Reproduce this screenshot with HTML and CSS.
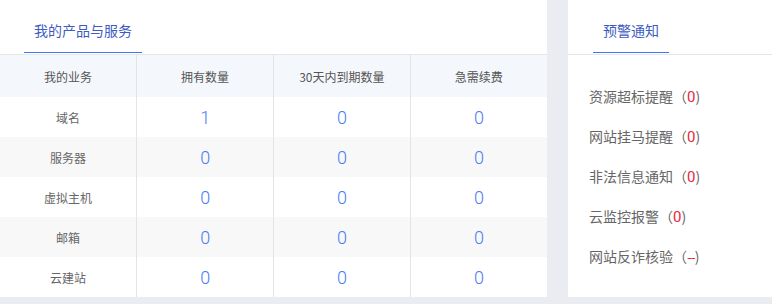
FILE: index.html
```html
<!DOCTYPE html>
<html lang="zh-CN">
<head>
    <meta charset="UTF-8">
    <title>我的产品与服务</title>
    <link rel="stylesheet" href="styles.css">
</head>
<body>

<div class="wrap">
    <!-- 产品与服务 -->
    <div class="panel panel-main">
        <div class="panel-head">
            <span class="tab">我的产品与服务</span>
        </div>
        <table class="biz-table">
            <thead>
                <tr>
                    <th>我的业务</th>
                    <th>拥有数量</th>
                    <th>30天内到期数量</th>
                    <th>急需续费</th>
                </tr>
            </thead>
            <tbody>
                <tr><td>域名</td><td class="num">1</td><td class="num">0</td><td class="num">0</td></tr>
                <tr><td>服务器</td><td class="num">0</td><td class="num">0</td><td class="num">0</td></tr>
                <tr><td>虚拟主机</td><td class="num">0</td><td class="num">0</td><td class="num">0</td></tr>
                <tr><td>邮箱</td><td class="num">0</td><td class="num">0</td><td class="num">0</td></tr>
                <tr><td>云建站</td><td class="num">0</td><td class="num">0</td><td class="num">0</td></tr>
            </tbody>
        </table>
    </div>

    <!-- 预警通知 -->
    <div class="panel panel-side">
        <div class="panel-head">
            <span class="tab">预警通知</span>
        </div>
        <ul class="notice-list">
            <li>资源超标提醒（<span class="red">0</span>)</li>
            <li>网站挂马提醒（<span class="red">0</span>)</li>
            <li>非法信息通知（<span class="red">0</span>)</li>
            <li>云监控报警（<span class="red">0</span>)</li>
            <li>网站反诈核验（<span class="red dash">--</span>)</li>
        </ul>
    </div>
</div>

</body>
</html>
```

FILE: styles.css
```css
body {
    margin: 0;
    padding: 0;
    background-color: #ebecf1;
    font-family: "Noto Sans CJK SC", "Noto Sans", sans-serif;
    color: #666;
}
.wrap {
    display: flex;
    gap: 21px;
    width: 772px;
}
.panel {
    background-color: #fff;
    height: 297px;
}
.panel-main {
    width: 547px;
}
.panel-side {
    flex: 1;
}
.panel-head {
    height: 54px;
    border-bottom: 1px solid #e6e6e6;
    padding-left: 24px;
}
.panel-side .panel-head {
    padding-left: 25px;
}
.tab {
    display: inline-block;
    padding: 20px 10px 0;
    height: 32px;
    line-height: 20px;
    font-size: 14px;
    color: #3d5bbf;
    border-bottom: 1px solid #3a78f2;
}
.biz-table {
    width: 100%;
    border-collapse: collapse;
    table-layout: fixed;
}
.biz-table th,
.biz-table td {
    text-align: center;
    padding: 0;
    font-weight: normal;
    font-size: 12px;
}
.biz-table th + th,
.biz-table td + td {
    border-left: 1px solid #e4e4e4;
}
.biz-table thead tr {
    height: 42px;
    background-color: #f4f8fc;
}
.biz-table th {
    color: #555;
}
.biz-table tbody tr {
    height: 40px;
}
.biz-table tbody tr:nth-child(even) {
    background-color: #f8f8f8;
}
.biz-table td.num {
    font-family: Roboto, "Noto Sans", sans-serif;
    font-weight: 300;
    font-size: 18px;
    color: #4a7cf6;
}
.notice-list {
    list-style: none;
    margin: 0;
    padding: 21px 0 0 21px;
}
.notice-list li {
    height: 40px;
    line-height: 40px;
    font-size: 14px;
    color: #666;
}
.red {
    font-family: Roboto, "Noto Sans", sans-serif;
    font-size: 15px;
    color: #f0243a;
}
.red.dash {
    font-family: "Noto Sans CJK SC", sans-serif;
    font-size: 14px;
    letter-spacing: -1px;
}
```
